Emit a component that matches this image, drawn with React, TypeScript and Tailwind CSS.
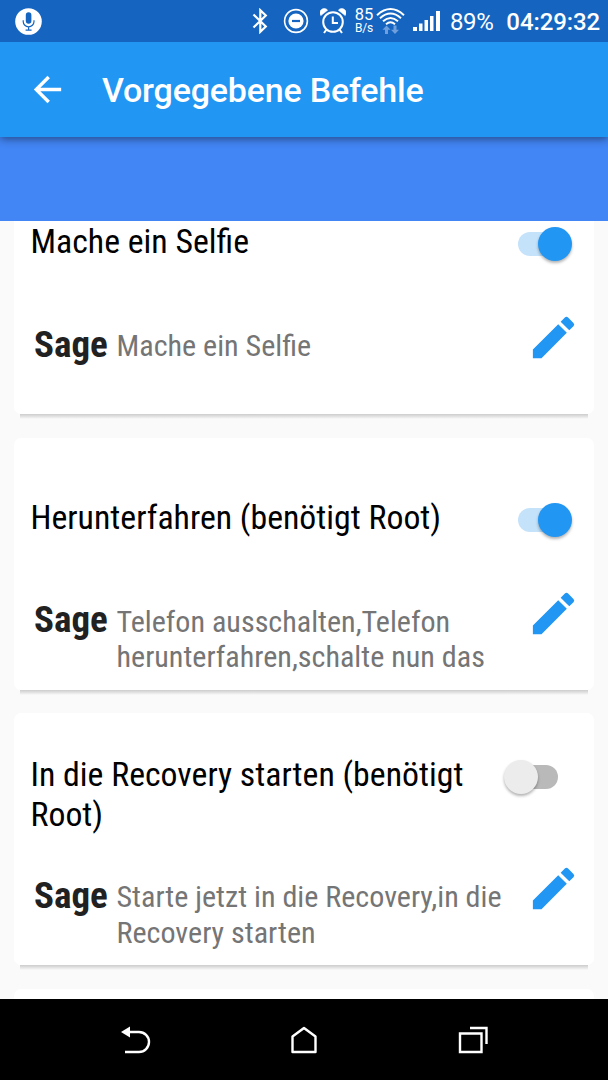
import clsx from "clsx";

type Command = {
  title: string;
  phrases: string;
  enabled: boolean;
};

const commands: Command[] = [
  {
    title: "Mache ein Selfie",
    phrases: "Mache ein Selfie",
    enabled: true,
  },
  {
    title: "Herunterfahren (benötigt Root)",
    phrases: "Telefon ausschalten,Telefon herunterfahren,schalte nun das",
    enabled: true,
  },
  {
    title: "In die Recovery starten (benötigt Root)",
    phrases: "Starte jetzt in die Recovery,in die Recovery starten",
    enabled: false,
  },
];

const StatusBar = () => {
  return (
    <div className="z-20 flex h-[42px] shrink-0 items-center bg-[#1565c0] text-white">
      <svg className="ml-[15px] size-[27px]" viewBox="0 0 27 27">
        <circle cx="13.5" cy="13.5" r="13.3" fill="#fff" />
        <rect x="10.8" y="4.2" width="5.6" height="11.6" rx="2.8" fill="#1565c0" />
        <path
          d="M8.2 12.2v1.2a5.4 5.4 0 0 0 10.8 0v-1.2M13.6 18.8v3.4M10.6 22.2h6"
          fill="none"
          stroke="#1565c0"
          strokeWidth="1.2"
        />
      </svg>
      <svg className="ml-[210px] h-[26px] w-[17px]" viewBox="0 0 17 26" fill="none" stroke="#fff" strokeWidth="2.2">
        <path d="M1.5 6.5 13.8 18.5 8.3 23.8V2.2l5.5 5.3L1.5 19.5" />
      </svg>
      <svg className="ml-[14px] size-[26px]" viewBox="0 0 26 26">
        <circle cx="13" cy="13" r="11.4" fill="none" stroke="#fff" strokeWidth="1.6" />
        <circle cx="13" cy="13" r="7.6" fill="#fff" />
        <path d="M9 13h8" stroke="#1565c0" strokeWidth="2.2" />
      </svg>
      <svg className="ml-[11px] size-[26px]" viewBox="0 0 26 26" fill="none" stroke="#fff">
        <circle cx="13" cy="14" r="9.8" strokeWidth="2" />
        <path d="M12.8 8.5V15h5.2" strokeWidth="2" />
        <path d="M6.5 21.5 4 25M19.5 21.5 22 25" strokeWidth="2" />
        <path d="M.8 7.6A4 4 0 0 1 7.6 2.2zM25.2 7.6a4 4 0 0 0-6.8-5.4z" fill="#fff" strokeWidth=".6" />
      </svg>
      <div className="ml-[8px] flex w-[20px] flex-col items-center">
        <span className="text-[16.5px] leading-[15px]">85</span>
        <span className="text-[12px] leading-[13px] tracking-[-0.2px]">B/s</span>
      </div>
      <svg className="ml-[2px] h-[28px] w-[29px]" viewBox="0 0 29 28" fill="none" stroke="#fff">
        <path d="M1 8.2Q14.5-4 28 8.2M4 11.3Q14.5 1.8 25 11.3M7 14.3q7.5-6.6 15 0M10 17.2q4.5-3.8 9 0" strokeWidth="1.9" />
        <path d="M10.5 18.5l4 4.2H12v4.3H9v-4.3H6.5zM19 27l-4-4.2h2.5v-4.3h3v4.3H23z" fill="#6f9fdc" stroke="none" />
      </svg>
      <svg className="ml-[8px] h-[20px] w-[27px]" viewBox="0 0 27 20" fill="#fff">
        <path d="M0 16h4v4H0zM6 12.5h3.5V20H6zM11.5 9H15v11h-3.5zM17 5h3.5v15H17zM23 0h4v20h-4z" />
      </svg>
      <span className="mt-[2px] ml-[10px] text-[24px] tracking-[-0.4px]">89%</span>
      <span className="mt-[2px] ml-[13px] text-[24px] font-medium tracking-[-0.1px]">04:29:32</span>
    </div>
  );
};

const AppBar = () => {
  return (
    <header className="z-10 flex h-[95px] shrink-0 items-center bg-[#2196f3] text-white shadow-[0_2px_8px_rgba(0,0,0,0.45)]">
      <svg className="ml-[27px] size-[41px]" viewBox="0 0 24 24" fill="#fff">
        <path d="M20 11H7.83l5.59-5.59L12 4l-8 8 8 8 1.41-1.41L7.83 13H20v-2z" />
      </svg>
      <h1 className="mt-[2px] ml-[34px] text-[34px] font-medium tracking-[-0.2px]">Vorgegebene Befehle</h1>
    </header>
  );
};

const Toggle = ({ enabled }: { enabled: boolean }) => {
  return (
    <div
      className={clsx(
        "flex h-[42px] w-[68px] shrink-0 items-center",
        enabled ? "justify-end" : "justify-start"
      )}
    >
      {enabled && <div className="h-6 w-[31px] rounded-l-full bg-[#c4e2fa]" />}
      <div
        className={clsx(
          "-mx-[11px] size-[34px] shrink-0 rounded-full shadow-[0_2px_3px_rgba(0,0,0,0.3)]",
          enabled ? "mr-0 bg-[#2196f3]" : "z-10 ml-0 bg-[#ececec]"
        )}
      />
      {!enabled && <div className="h-6 w-[31px] rounded-r-full bg-[#b9b9b9]" />}
    </div>
  );
};

const CommandCard = ({ title, phrases, enabled }: Command) => {
  return (
    <div className="mb-[23.5px] h-[252px] shrink-0">
      <div className="flex h-full flex-col rounded-[7px] bg-white pr-[20px] pl-[16.5px] font-['Roboto_Condensed','Roboto',sans-serif] [font-stretch:75%]">
        <div className="mt-[19.5px] flex h-[124px] shrink-0 items-center">
          <div className="flex w-full items-start justify-between">
            <h2 className="w-[455px] text-[33.8px] leading-[40px] text-black">{title}</h2>
            <div className="mt-px mr-[2px]">
              <Toggle enabled={enabled} />
            </div>
          </div>
        </div>
        <div className="mt-[16.5px] flex items-start pl-[3.5px]">
          <span className="w-[82.5px] pt-[0.5px] text-[37px] leading-[44px] font-bold text-[#212121]">Sage</span>
          <p className="mt-[6.2px] w-[400px] text-[30.1px] leading-[35.5px] text-[#757575]">{phrases}</p>
          <svg className="-mt-[12px] -mr-[7px] ml-auto size-[55px] shrink-0" viewBox="0 0 24 24" fill="#2196f3">
            <path d="M3 17.25V21h3.75L17.81 9.94l-3.75-3.75L3 17.25zM20.71 7.04a1 1 0 0 0 0-1.41l-2.34-2.34a1 1 0 0 0-1.41 0l-1.83 1.83 3.75 3.75 1.83-1.83z" />
          </svg>
        </div>
      </div>
      <div className="mx-[6px] h-[5px] bg-linear-to-b from-[#cccccc] to-[#fafafa]" />
    </div>
  );
};

const NavBar = () => {
  return (
    <nav className="flex h-[81px] shrink-0 items-center bg-black">
      <svg className="ml-[121px] h-[28px] w-[30px]" viewBox="0 0 30 28" fill="none" stroke="#fff" strokeWidth="2.4">
        <path d="M8 6h10a10 10 0 0 1 0 20H4" />
        <path d="M0 6l9-5.5v11z" fill="#fff" stroke="none" />
      </svg>
      <svg className="ml-[140px] h-[28px] w-[26px]" viewBox="0 0 26 28" fill="none" stroke="#fff" strokeWidth="2.4">
        <path d="M1.5 10.5 13 2l11.5 8.5V26h-23z" strokeLinejoin="round" />
      </svg>
      <svg className="ml-[141px] h-[28px] w-[30px]" viewBox="0 0 30 28" fill="none" stroke="#fff" strokeWidth="2.4">
        <path d="M2 7.5H23.5V26H2zM12 2h16.5v16" />
      </svg>
    </nav>
  );
};

const App = () => {
  return (
    <div className="flex h-[1080px] w-[608px] flex-col overflow-hidden bg-[#fafafa] font-['Roboto',sans-serif]">
      <StatusBar />
      <AppBar />
      <div className="h-[84px] shrink-0 bg-[#4285f4]" />
      <main className="h-[778px] shrink-0 overflow-hidden px-[14px]">
        <div className="-mt-[59px] flex flex-col">
          {commands.map((command) => (
            <CommandCard key={command.title} {...command} />
          ))}
          <div className="h-[252px] shrink-0 rounded-[7px] bg-white" />
        </div>
      </main>
      <NavBar />
    </div>
  );
};

export default App;
